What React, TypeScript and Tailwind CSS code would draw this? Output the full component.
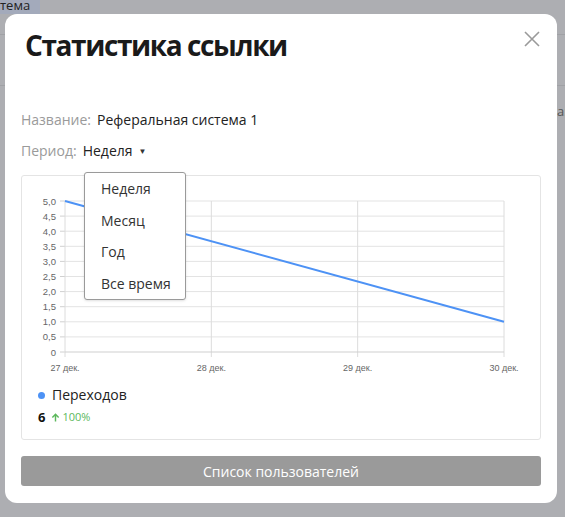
import { useState } from "react"

const yLabels = ["5,0", "4,5", "4,0", "3,5", "3,0", "2,5", "2,0", "1,5", "1,0", "0,5", "0"]
const xLabels = ["27 дек.", "28 дек.", "29 дек.", "30 дек."]
const periods = ["Неделя", "Месяц", "Год", "Все время"]

const PLOT_LEFT = 43
const PLOT_RIGHT = 482
const PLOT_TOP = 25
const PLOT_BOTTOM = 176

const LinkChart = () => {
  const step = (PLOT_BOTTOM - PLOT_TOP) / 10
  const colStep = (PLOT_RIGHT - PLOT_LEFT) / 3
  const yFor = (v: number) => PLOT_BOTTOM - (v / 5) * (PLOT_BOTTOM - PLOT_TOP)

  return (
    <svg width="518" height="200" className="block" style={{ fontFamily: "'Liberation Sans', Arial, sans-serif" }}>
      {yLabels.map((label, i) => {
        const y = PLOT_TOP + i * step
        return (
          <g key={label}>
            {i < 10 && <line x1={PLOT_LEFT} x2={PLOT_RIGHT} y1={y} y2={y} stroke="#e3e3e3" strokeWidth="1" />}
            <line x1={PLOT_LEFT - 5} x2={PLOT_LEFT} y1={y} y2={y} stroke="#d0d0d0" strokeWidth="1" />
            <text x={PLOT_LEFT - 9} y={y + 3.5} textAnchor="end" fontSize="9.5" fill="#666">
              {label}
            </text>
          </g>
        )
      })}
      {xLabels.map((label, i) => {
        const x = PLOT_LEFT + i * colStep
        return (
          <g key={label}>
            <line x1={x} x2={x} y1={PLOT_TOP} y2={PLOT_BOTTOM + 5} stroke="#dcdcdc" strokeWidth="1" />
            <text x={x} y={195} textAnchor="middle" fontSize="9" fill="#666">
              {label}
            </text>
          </g>
        )
      })}
      <line x1={PLOT_LEFT} x2={PLOT_RIGHT} y1={PLOT_BOTTOM} y2={PLOT_BOTTOM} stroke="#cfcfcf" strokeWidth="1" />
      <line x1={PLOT_LEFT} y1={yFor(5)} x2={PLOT_RIGHT} y2={yFor(1)} stroke="#4d92f5" strokeWidth="2" />
    </svg>
  )
}

export default function App() {
  const [period] = useState("Неделя")

  return (
    <div
      className="relative h-[517px] w-[565px] overflow-hidden bg-[#adaeb2]"
      style={{ fontFamily: "'Open Sans', 'Noto Sans', sans-serif" }}
    >
      {/* page behind the overlay */}
      <div className="absolute left-0 top-0 h-[14px] w-[40px] bg-[#a3aabb] text-[13px] leading-[10px] text-[#222] overflow-hidden">
        тема
      </div>
      <div className="absolute left-0 top-[34px] h-px w-full bg-[#a0a1a5]" />
      <div className="absolute left-0 top-[85px] h-px w-full bg-[#a0a1a5]" />
      <div className="absolute left-[557px] top-[102px] text-[13px] text-[#555]">а:</div>

      {/* modal */}
      <div className="relative z-10 ml-[5px] mt-[14px] flex h-[489px] w-[552px] flex-col rounded-[12px] bg-white px-4 pb-[17px] pt-[13px]">
        <h1 className="pl-[4px] text-[28px] font-bold leading-[36px] tracking-[-1.4px] text-[#1a1a1a]">
          Статистика ссылки
        </h1>
        <button className="absolute right-[17px] top-[17px] h-4 w-4">
          <svg viewBox="0 0 16 16" className="h-4 w-4" fill="none" stroke="#9a9a9a" strokeWidth="1.6">
            <path d="M1 1 L15 15 M15 1 L1 15" />
          </svg>
        </button>

        <div className="mt-[47px] flex items-center gap-[6px] text-[14px] leading-[20px]">
          <span className="text-[#9a9a9a]">Название:</span>
          <span className="text-[#222]">Реферальная система 1</span>
        </div>
        <div className="mt-[11px] flex items-center gap-[6px] text-[14px] leading-[20px]">
          <span className="text-[#9a9a9a]">Период:</span>
          <span className="flex items-center gap-[6px] text-[#222]">
            {period}
            <span className="text-[8px] text-[#333]">▼</span>
          </span>
        </div>

        <div className="mt-[14px] flex flex-col rounded-[3px] border border-[#e4e4e4]">
          <LinkChart />
          <div className="ml-[16px] mt-[9px] flex items-center gap-[7px]">
            <span className="h-[7px] w-[7px] rounded-full bg-[#4d92f5]" />
            <span className="text-[14px] leading-[20px] text-[#222]">Переходов</span>
          </div>
          <div className="ml-[16px] mt-[3px] flex items-center gap-[6px] pb-[13px]">
            <span className="text-[13px] font-bold leading-[18px] text-[#111]">6</span>
            <span className="flex items-center gap-[2px] text-[11px] leading-[18px] text-[#5cb85c]">
              <svg viewBox="0 0 10 10" className="h-[9px] w-[9px]" fill="none" stroke="#5cb85c" strokeWidth="1.6">
                <path d="M5 9.5 V1.5 M1.5 5 L5 1.5 L8.5 5" />
              </svg>
              100%
            </span>
          </div>
        </div>

        <button className="mt-auto h-[30px] w-full rounded-[3px] bg-[#9a9a9a] text-[14px] text-white">
          Список пользователей
        </button>

        {/* open period dropdown */}
        <div className="absolute left-[79px] top-[158px] flex w-[102px] flex-col rounded-[3px] border border-[#9a9a9a] bg-white shadow-sm">
          {periods.map((p) => (
            <div key={p} className="flex h-[31.5px] items-center pl-[16px] text-[14px] text-[#333]">
              {p}
            </div>
          ))}
        </div>
      </div>
    </div>
  )
}
